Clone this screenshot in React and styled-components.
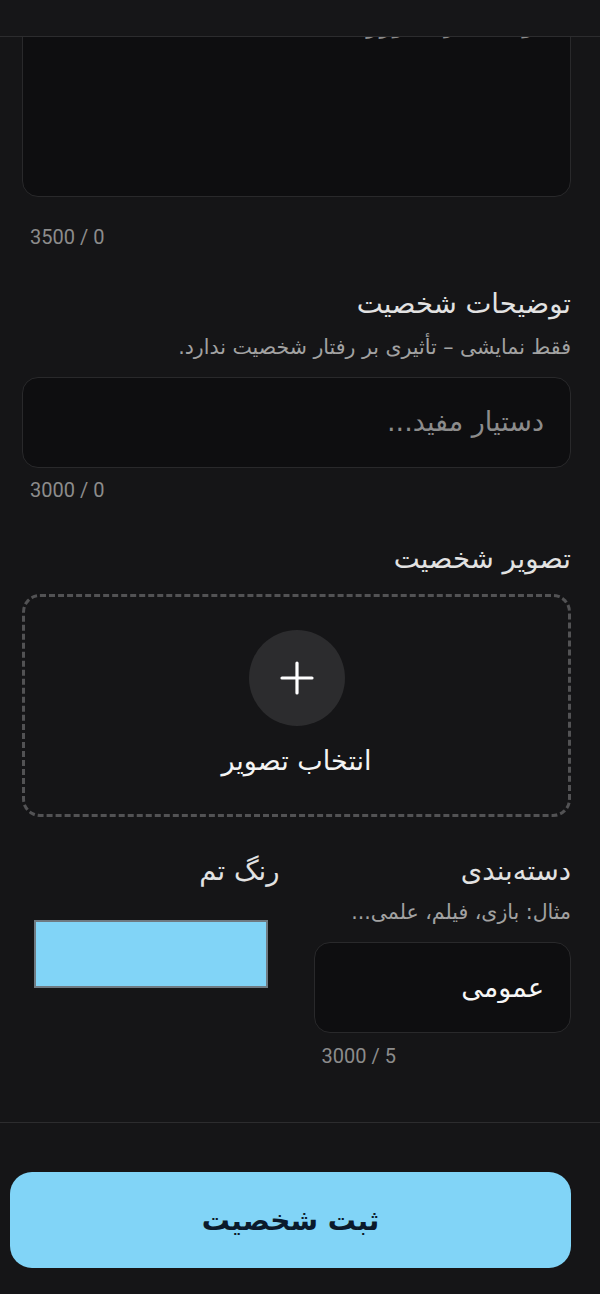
import React, { useEffect, useLayoutEffect, useRef } from "react";
import styled, { createGlobalStyle } from "styled-components";

const FONT = `"DejaVu Sans", "Noto Sans Arabic", sans-serif`;
const DIGITS = `Roboto, "DejaVu Sans", sans-serif`;

const Global = createGlobalStyle`
  html, body { margin: 0; padding: 0; background: #151517; }
  body { font-family: ${FONT}; }
  * { box-sizing: border-box; }
`;

const Page = styled.div`
  direction: rtl;
  width: 600px;
  height: 1294px;
  display: flex;
  flex-direction: column;
  background: #151517;
  color: #e8e8e8;
  overflow: hidden;
`;

const Header = styled.header`
  height: 37px;
  flex: none;
  background: #161618;
  border-bottom: 1px solid #2c2c2e;
`;

const Scroller = styled.main`
  flex: 1;
  min-height: 0;
  overflow: hidden;
`;

const Content = styled.div`
  padding: 0 29px 200px 22px;
`;

const TextArea = styled.textarea`
  display: block;
  width: 100%;
  height: ${(p) => p.$h}px;
  margin: ${(p) => p.$mt || 0}px 0 0;
  padding: ${(p) => p.$pt}px 26px 10px 20px;
  resize: none;
  overflow: hidden;
  background: #0e0e10;
  border: 1px solid #29292b;
  border-radius: 16px;
  color: #f2f2f2;
  font-family: ${FONT};
  font-size: 27px;
  line-height: 36px;
  direction: rtl;
  outline: none;
  &::placeholder { color: #8c8c8c; }
`;

const TextInput = styled.input`
  display: block;
  width: 100%;
  height: 91px;
  margin-top: ${(p) => p.$mt || 0}px;
  padding: 0 26px 0 20px;
  background: #0e0e10;
  border: 1px solid #29292b;
  border-radius: 16px;
  color: #f6f6f6;
  font-family: ${FONT};
  font-size: 27px;
  direction: rtl;
  outline: none;
`;

const Counter = styled.div`
  margin-top: ${(p) => p.$mt}px;
  padding: 0 8px;
  font-family: ${DIGITS};
  font-size: 20px;
  line-height: 20px;
  color: #8c8c8c;
  text-align: left;
`;

const Label = styled.div`
  margin-top: ${(p) => p.$mt || 0}px;
  font-size: 27.5px;
  line-height: 36px;
  color: #e2e2e2;
  white-space: nowrap;
`;

const Helper = styled.div`
  margin-top: ${(p) => p.$mt}px;
  font-size: 20.5px;
  line-height: 30px;
  color: #a2a2a2;
  white-space: nowrap;
`;

const DropZone = styled.div`
  margin-top: 18px;
  height: 223px;
  padding-top: 33px;
  border: 3px dashed #525254;
  border-radius: 18px;
  display: flex;
  flex-direction: column;
  align-items: center;
`;

const PlusCircle = styled.div`
  width: 96px;
  height: 96px;
  border-radius: 50%;
  background: #2c2c2e;
  display: flex;
  align-items: center;
  justify-content: center;
`;

const PickText = styled.div`
  margin-top: 17px;
  font-size: 27px;
  line-height: 36px;
  color: #f4f4f4;
`;

const Row = styled.div`
  margin-top: 35px;
  display: grid;
  grid-template-columns: 1fr 1fr;
  column-gap: 34px;
`;

const Column = styled.div`
  display: flex;
  flex-direction: column;
  min-width: 0;
`;

const Swatch = styled.div`
  margin: 32px auto 0;
  width: 234px;
  height: 68px;
  background: #81d4f7;
  border: 2px solid #6f7a82;
`;

const Footer = styled.footer`
  flex: none;
  height: 172px;
  border-top: 1px solid #2c2c2e;
  padding: 49px 29px 0 10px;
`;

const SubmitButton = styled.button`
  display: block;
  width: 100%;
  height: 96px;
  border: none;
  border-radius: 22px;
  background: #81d4f7;
  color: #0b1a2b;
  font-family: ${FONT};
  font-size: 28px;
  font-weight: 700;
  cursor: pointer;
`;

function PlusIcon() {
  return (
    <svg width="34" height="34" viewBox="0 0 34 34" fill="none">
      <path d="M17 2v30M2 17h30" stroke="#ffffff" strokeWidth="3.2" strokeLinecap="round" />
    </svg>
  );
}

export default function App() {
  const scrollRef = useRef(null);
  const applyScroll = () => {
    if (scrollRef.current) scrollRef.current.scrollTop = 40;
  };
  useLayoutEffect(applyScroll, []);
  useEffect(() => {
    applyScroll();
    const id = requestAnimationFrame(applyScroll);
    return () => cancelAnimationFrame(id);
  }, []);

  return (
    <>
      <Global />
      <Page>
        <Header />
        <Scroller ref={scrollRef}>
          <Content>
            <TextArea
              $h={200}
              $pt={7}
              readOnly
              placeholder="تو یک مربی ورزشی هستی"
            />
            <Counter $mt={30} dir="rtl">0 / 3500</Counter>

            <Label $mt={38}>توضیحات شخصیت</Label>
            <Helper $mt={11}>فقط نمایشی – تأثیری بر رفتار شخصیت ندارد.</Helper>
            <TextArea $h={91} $pt={26} $mt={15} readOnly placeholder="دستیار مفید..." />
            <Counter $mt={12} dir="rtl">0 / 3000</Counter>

            <Label $mt={40}>تصویر شخصیت</Label>
            <DropZone>
              <PlusCircle>
                <PlusIcon />
              </PlusCircle>
              <PickText>انتخاب تصویر</PickText>
            </DropZone>

            <Row>
              <Column>
                <Label>دسته‌بندی</Label>
                <Helper $mt={9}>مثال: بازی، فیلم، علمی...</Helper>
                <TextInput $mt={15} readOnly defaultValue="عمومی" />
                <Counter $mt={13} dir="rtl">5 / 3000</Counter>
              </Column>
              <Column>
                <Label>رنگ تم</Label>
                <Swatch />
              </Column>
            </Row>
          </Content>
        </Scroller>
        <Footer>
          <SubmitButton>ثبت شخصیت</SubmitButton>
        </Footer>
      </Page>
    </>
  );
}
